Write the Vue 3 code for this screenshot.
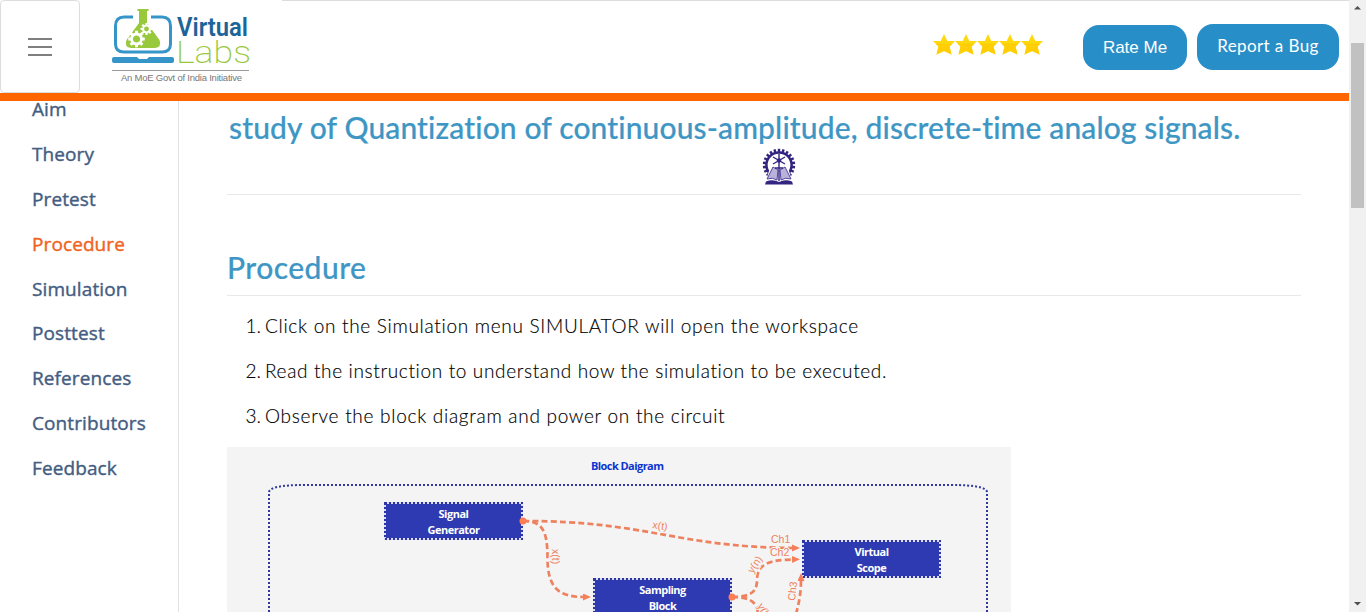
<script setup>
const links = ['Aim', 'Theory', 'Pretest', 'Procedure', 'Simulation', 'Posttest', 'References', 'Contributors', 'Feedback']
const steps = [
  'Click on the Simulation menu SIMULATOR will open the workspace',
  'Read the instruction to understand how the simulation to be executed.',
  'Observe the block diagram and power on the circuit',
]
const blocks = [
  { x: 385, y: 503, top: 'Signal', bottom: 'Generator' },
  { x: 594, y: 579, top: 'Sampling', bottom: 'Block' },
  { x: 803, y: 541, top: 'Virtual', bottom: 'Scope' },
]
const teeth = Array.from({ length: 22 }, (_, i) => (i * 360) / 22)
const cogs = Array.from({ length: 8 }, (_, i) => i * 45)
</script>

<template>
  <div class="page">
    <div class="main">
      <header class="header">
        <button class="menu" aria-label="Menu"><i></i><i></i><i></i></button>
        <svg class="logo" width="142" height="80" viewBox="110 5 142 80">
          <path d="M133 17H124Q115.500 17 115.500 26V44Q115.500 52 124 52H162Q170.500 52 170.500 44V26Q170.500 17 162 17H151" fill="none" stroke="#3695c8" stroke-width="3" />
          <path d="M137.500 9H148.500V11H147V23L159.500 40Q162 47 155 48H131Q124 47 126.500 40L139 23V11H137.500Z" fill="#98c83c" />
          <g fill="#fff" stroke="#fff">
            <g transform="translate(136.500 39)">
              <rect v-for="a in cogs" :key="a" x="-1.500" y="-8.300" width="3" height="4" stroke="none" :transform="`rotate(${a})`" />
              <circle r="5" fill="#98c83c" stroke-width="2.800" />
            </g>
            <g transform="translate(146.500 29)">
              <rect v-for="a in cogs" :key="a" x="-1.100" y="-6" width="2.200" height="3" stroke="none" :transform="`rotate(${a})`" />
              <circle r="3.400" fill="#98c83c" stroke-width="2" />
            </g>
          </g>
          <path d="M114 57H137L139 59H147L149 57H172Q174 57 174 59V61Q174 63 172 63H114Q112 63 112 61V59Q112 57 114 57Z" fill="#3695c8" />
          <text class="logo-virtual" x="177" y="36" textLength="71" lengthAdjust="spacingAndGlyphs">Virtual</text>
          <text class="logo-labs" x="176" y="63" textLength="75" lengthAdjust="spacingAndGlyphs">Labs</text>
          <path d="M112 70.500H249" stroke="#999" />
          <text class="logo-note" x="121" y="81" textLength="121">An MoE Govt of India Initiative</text>
        </svg>
        <div class="actions">
          <svg class="stars" width="110" height="22" viewBox="0 0 110 22">
            <g v-for="n in 5" :key="n" :transform="`translate(${(n - 1) * 22} 0)`">
              <path d="M11 0L14.300 7H22L16.500 12.500L18.500 20.500L11 17L3.500 20.500L5.500 12.500L0 7H7.700Z" fill="#ffd90f" />
              <path d="M2.500 9.500H19.500L16.500 12.500L18.500 20.500L11 17L3.500 20.500L5.500 12.500Z" fill="#ffce05" />
            </g>
          </svg>
          <button class="btn rate">Rate Me</button>
          <button class="btn bug">Report a Bug</button>
        </div>
      </header>

      <div class="body">
        <nav class="nav">
          <a v-for="l in links" :key="l" :class="{ active: l === 'Procedure' }">{{ l }}</a>
        </nav>
        <main class="content">
          <h1>study of Quantization of continuous-amplitude, discrete-time analog signals.</h1>
          <div class="crest">
            <svg width="34" height="38" viewBox="0 0 34 38">
              <g transform="translate(17 17)" fill="#33247f">
                <rect v-for="a in teeth" :key="a" x="-1.200" y="-16.200" width="2.400" height="4" :transform="`rotate(${a})`" />
                <circle r="12.600" fill="#fff" stroke="#33247f" stroke-width="2.500" />
              </g>
              <path d="M2 37L5 29L8 20H26L29 29L32 37Z" fill="#fff" />
              <path d="M11 19L5 31Q11 29 15 32L16 22ZM23 19L29 31Q23 29 19 32L18 22Z" fill="#b9b3dc" stroke="#51459a" />
              <path d="M4 33.500Q11 31 17 34Q23 31 30 33.500L31 36.500H3Z" fill="#33247f" />
              <path d="M17 6V33M11 9L23 16M23 9L11 16M13 20H21" stroke="#33247f" stroke-width="1.400" fill="none" />
              <circle cx="17" cy="12.500" r="2.200" fill="#33247f" />
            </svg>
          </div>
          <h2>Procedure</h2>
          <ol>
            <li v-for="(s, i) in steps" :key="s"><b>{{ i + 1 }}.</b><span :class="'step' + i">{{ s }}</span></li>
          </ol>
          <svg class="diagram" width="784" height="165" viewBox="227 447 784 165">
            <defs>
              <marker id="arrow" markerUnits="userSpaceOnUse" markerWidth="9" markerHeight="8" refX="1" refY="3.500" orient="auto">
                <path d="M0 0L8 3.500L0 7Z" fill="#f47f5a" />
              </marker>
            </defs>
            <rect x="227" y="447" width="784" height="165" fill="#f4f4f4" />
            <text class="caption" x="591" y="470" textLength="73">Block Daigram</text>
            <path d="M269 612V492Q270 485 305 485H951Q986 485 987 492V612" fill="none" stroke="#3038a0" stroke-width="2" stroke-dasharray="2 2" />
            <g v-for="b in blocks" :key="b.top">
              <rect :x="b.x" :y="b.y" width="137" height="36" fill="#2e3ab1" stroke="#dcdcf5" stroke-width="2" />
              <rect :x="b.x" :y="b.y" width="137" height="36" fill="none" stroke="#2e35a0" stroke-width="2" stroke-dasharray="2 2" />
              <text class="block" :x="b.x + 68.500" :y="b.y + 15">{{ b.top }}</text>
              <text class="block" :x="b.x + 68.500" :y="b.y + 31">{{ b.bottom }}</text>
            </g>
            <g class="wires" fill="none" stroke="#ee825f" stroke-width="2.700" stroke-dasharray="6 3.200">
              <path d="M523 521C648 521 675 547 793 548" marker-end="url(#arrow)" />
              <path d="M523 521C542 521 547.500 530 547.500 558C547.500 588 559 597 584 597" marker-end="url(#arrow)" />
              <path d="M732 597C752 597 757 591 757 580C757 563 771 560 793 559.500" marker-end="url(#arrow)" />
              <path d="M732 597C752 597 757 603 758 614" />
              <path d="M796 614C799 603 801 593 801 580" marker-end="url(#arrow)" />
            </g>
            <circle cx="523" cy="521" r="3.500" fill="#ff7d55" />
            <circle cx="732" cy="597" r="3.500" fill="#ff7d55" />
            <g class="label">
              <text transform="translate(652 528) rotate(9)">x(t)</text>
              <text transform="translate(552 549) rotate(90)">x(t)</text>
              <text transform="translate(753 574) rotate(-58)">y(n)</text>
              <text x="771" y="543">Ch1</text>
              <text x="770" y="556">Ch2</text>
              <text transform="translate(795 601) rotate(-84)">Ch3</text>
              <text transform="translate(757 606) rotate(58)">y(k)</text>
            </g>
          </svg>
        </main>
      </div>
    </div>
    <div class="scroll">
      <svg width="17" height="17"><path d="M5 9.500L8.500 6L12 9.500Z" fill="#505050" /></svg>
      <div class="thumb"></div>
      <svg class="down" width="17" height="17"><path d="M5 7L8.500 10.500L12 7Z" fill="#505050" /></svg>
    </div>
  </div>
</template>

<style>
html, body { overflow: hidden; }
</style>
<style scoped>
* { box-sizing: border-box; }
.page { display: flex; width: 1366px; height: 612px; overflow: hidden; background: #fff; font-family: Lato, "Open Sans", sans-serif; }
.main { flex: 1; min-width: 0; display: flex; flex-direction: column; }
.header { flex: none; display: flex; height: 101px; border-bottom: 8px solid #f60; }
.menu { width: 80px; height: 93px; border: 1px solid #ddd; border-radius: 4px; background: #fff; padding: 0; display: flex; flex-direction: column; align-items: center; justify-content: center; gap: 6px; }
.menu i { width: 24px; height: 2px; background: #7f7f7f; }
.logo { margin: 5px 0 0 30px; overflow: visible; }
.logo-virtual { font: 600 26px Roboto, sans-serif; fill: #1d6498; }
.logo-labs { font: 200 32px Roboto, sans-serif; fill: #98c83c; }
.logo-note { font: 9.500px "Liberation Sans", sans-serif; fill: #777; }
.actions { flex: 1; display: flex; align-items: flex-start; margin-left: 30px; padding-right: 10px; border-top: 1px solid #ddd; justify-content: flex-end; }
.stars { margin: 33px 40px 0 0; }
.btn { border: 0; border-radius: 16px; background: #288ec8; color: #fff; padding: 0; white-space: nowrap; }
.rate { width: 104px; height: 45px; margin: 24px 10px 0 0; font: 17px "Liberation Sans", sans-serif; }
.bug { width: 142px; height: 46px; margin-top: 23px; padding-bottom: 3px; font: 17px Lato, sans-serif; letter-spacing: .4px; }
.body { display: flex; flex: 1; min-height: 0; }
.nav { width: 179px; border-right: 1px solid #e2e2e2; padding: 0 0 0 32px; }
.nav a { display: block; height: 44.900px; font: 500 19px/25px "Open Sans", sans-serif; color: #445d82; -webkit-text-stroke: .4px; letter-spacing: .1px; }
.nav a:first-child { margin-top: -4px; }
.nav .active { color: #f0641e; }
.content { width: 1074px; margin-left: 48px; }
h1, h2 { margin: 0; font-weight: 500; font-size: 30px; color: #3e96c5; white-space: nowrap; -webkit-text-stroke: .2px; }
h1 { height: 45px; padding: 8px 0 0 2px; line-height: 36px; letter-spacing: .13px; }
.crest { display: flex; justify-content: center; height: 49px; padding: 2px 0 0 29px; border-bottom: 1px solid #e8e8e8; }
h2 { height: 101px; padding-top: 54px; line-height: 36px; letter-spacing: .45px; border-bottom: 1px solid #e8e8e8; }
ol { list-style: none; margin: 0; padding: 19px 0 0; height: 151px; font-size: 19px; font-weight: 300; color: #000; }
li { display: flex; height: 45px; line-height: 22px; white-space: nowrap; -webkit-text-stroke: .15px; }
li b { font-weight: 300; width: 34px; text-align: right; margin-right: 4px; }
.step0 { letter-spacing: .7px; }
.step1 { letter-spacing: .65px; }
.step2 { letter-spacing: .72px; }
.diagram { display: block; }
.caption { font: 700 11px "Open Sans", sans-serif; fill: #0b35d0; }
.block { font: 700 11px "Open Sans", sans-serif; fill: #fff; text-anchor: middle; letter-spacing: -.5px; }
.label { font: 10.500px "Liberation Sans", sans-serif; fill: #ee825f; stroke: #f4f4f4; stroke-width: 2px; paint-order: stroke; }
.scroll { width: 17px; height: 612px; background: #f1f1f1; display: flex; flex-direction: column; align-items: center; }
.scroll svg { display: block; flex: none; }
.thumb { width: 13px; height: 165px; margin-top: 26px; background: #c1c1c1; }
.down { margin-top: auto; }
</style>
